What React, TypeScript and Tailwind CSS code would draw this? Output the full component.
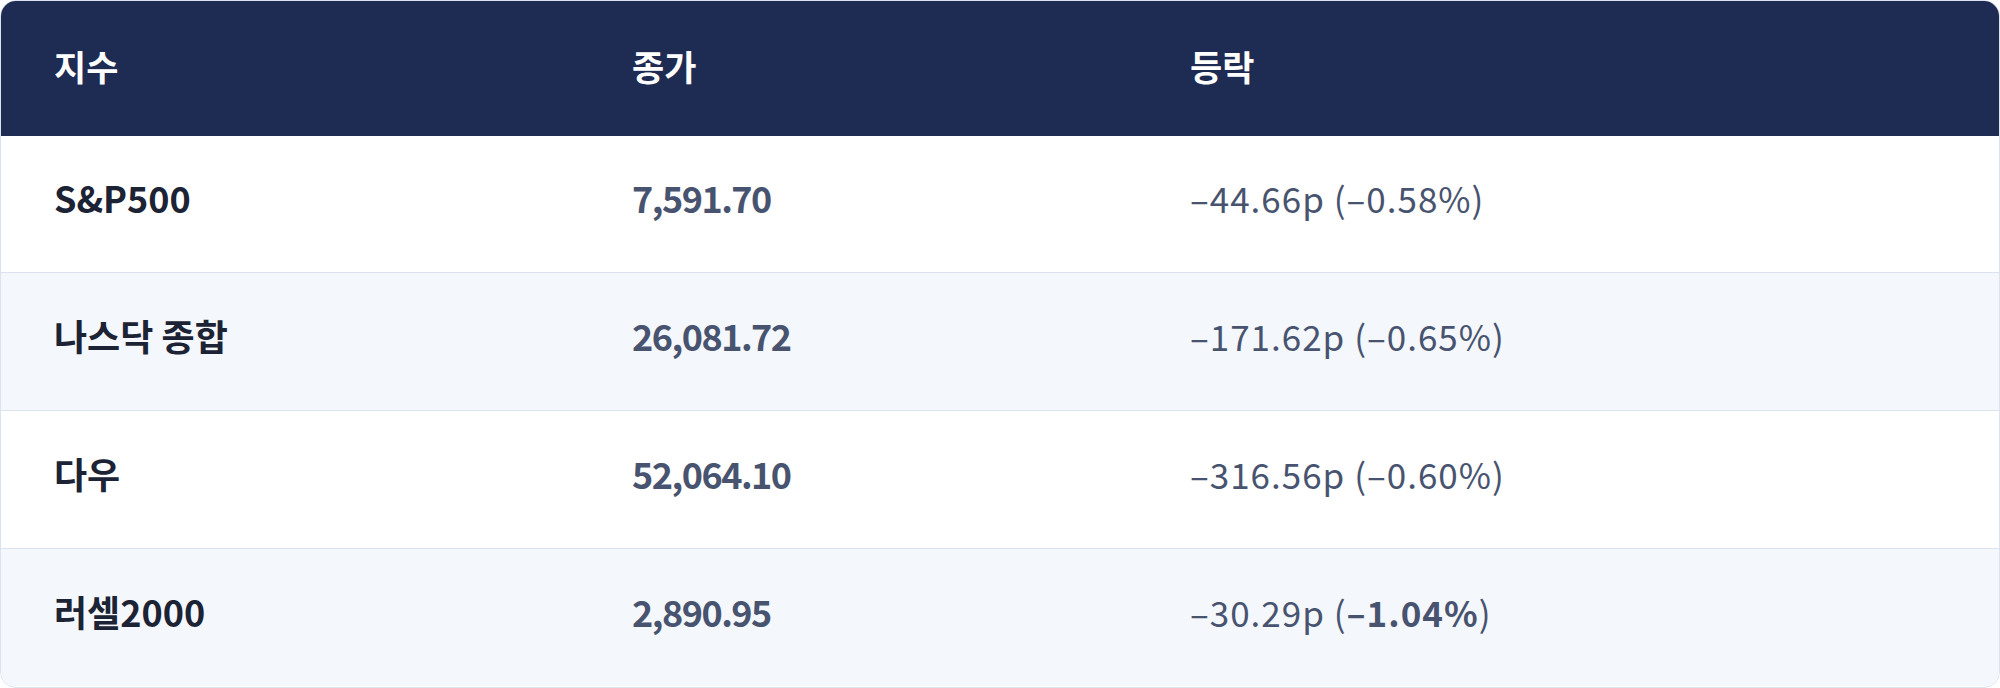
const rows = [
  { name: "S&P500", close: "7,591.70", diff: "–44.66p", pct: "–0.58%", strong: false },
  { name: "나스닥 종합", close: "26,081.72", diff: "–171.62p", pct: "–0.65%", strong: false },
  { name: "다우", close: "52,064.10", diff: "–316.56p", pct: "–0.60%", strong: false },
  { name: "러셀2000", close: "2,890.95", diff: "–30.29p", pct: "–1.04%", strong: true },
];

const cols = "grid grid-cols-[577px_558px_1fr]";

export default function App() {
  return (
    <div className="w-[2000px] h-[688px] bg-white font-['Noto_Sans_CJK_KR',sans-serif]">
      <div className="h-full overflow-hidden rounded-2xl border border-[#dbe3f0]">
        <div className={`${cols} h-[135px] items-center bg-[#1e2b53] pb-[4px] text-[35px] font-bold text-white`}>
          <div className="pl-[53px]">지수</div>
          <div className="pl-[54px]">종가</div>
          <div className="pl-[54px]">등락</div>
        </div>
        {rows.map((r, i) => (
          <div
            key={r.name}
            className={`${cols} items-center ${i === 0 ? "h-[136px]" : "h-[138px] border-t border-[#dbe3f0]"} ${
              i % 2 === 1 ? "bg-[#f4f7fc]" : "bg-white"
            }`}
          >
            <div className="pl-[53px] pb-[14px] text-[36px] font-bold text-[#1c2334]">{r.name}</div>
            <div className="pl-[54px] pb-[14px] text-[36px] font-semibold tracking-[-1.5px] text-[#48546f]">
              {r.close}
            </div>
            <div className="pl-[54px] pb-[11px] text-[35px] font-normal tracking-[1px] text-[#48546f]">
              {r.diff} (
              {r.strong ? <span className="font-bold">{r.pct}</span> : r.pct})
            </div>
          </div>
        ))}
      </div>
    </div>
  );
}
